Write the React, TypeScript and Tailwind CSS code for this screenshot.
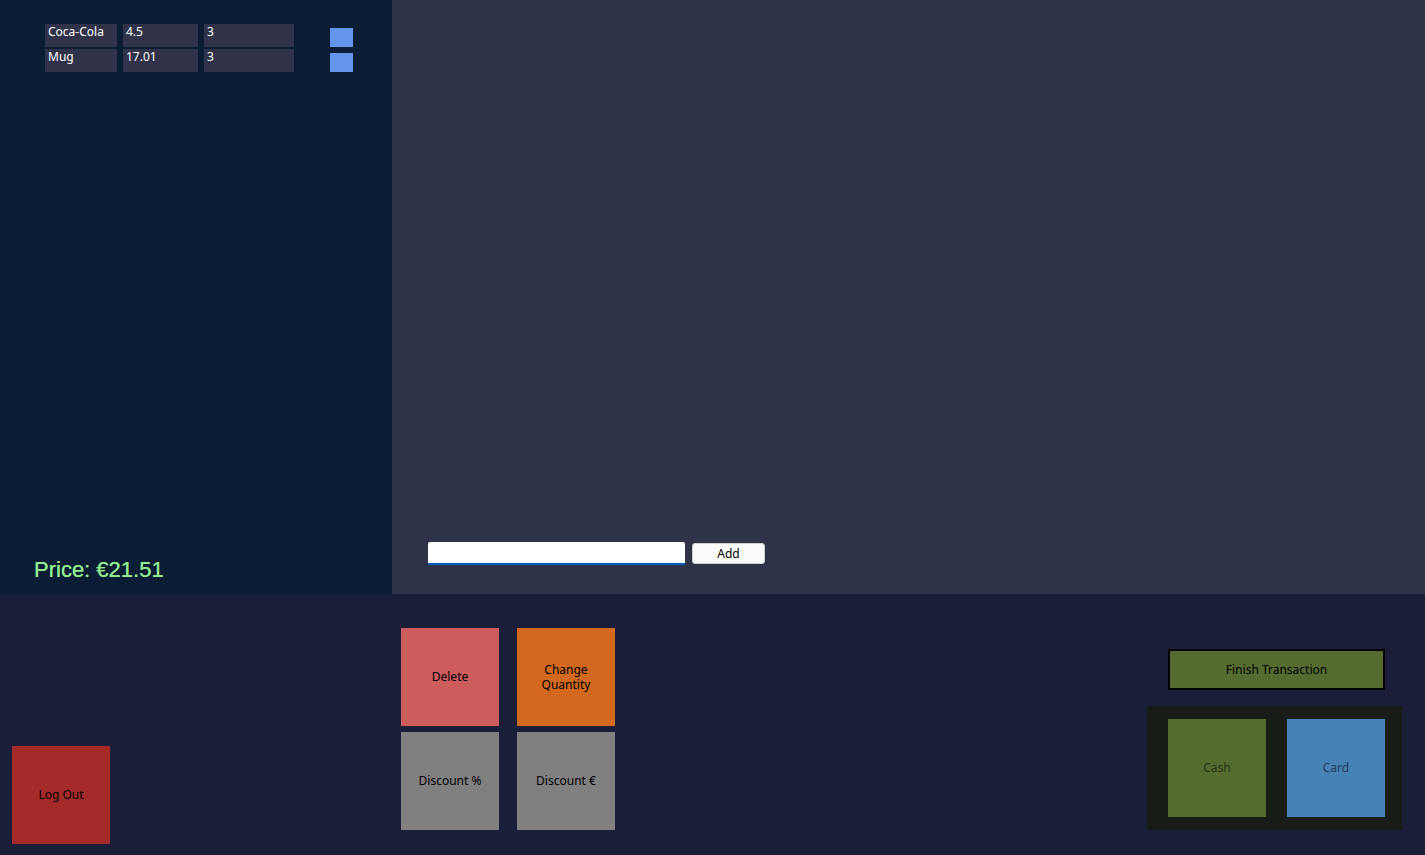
import React from "react";

const rows = [
  { name: "Coca-Cola", price: "4.5", qty: "3" },
  { name: "Mug", price: "17.01", qty: "3" },
];

export default function App() {
  const font = { fontFamily: '"Noto Sans", "Open Sans", sans-serif' };
  return (
    <div className="w-[1425px] h-[855px] flex flex-col overflow-hidden text-[12px]" style={font}>
      <div className="flex h-[594px]">
        <div className="w-[392px] bg-[#0b1d35] flex flex-col justify-between">
          <div className="pt-[24px] pl-[45px] flex flex-col gap-[2px]">
            {rows.map((r) => (
              <div key={r.name} className="flex items-center h-[23px]">
                <div className="w-[72px] h-[23px] bg-[#2f3249] text-white pl-[3px] leading-[16px]">{r.name}</div>
                <div className="w-[75px] h-[23px] bg-[#2f3249] text-white pl-[3px] leading-[16px] ml-[6px]">{r.price}</div>
                <div className="w-[90px] h-[23px] bg-[#2f3249] text-white pl-[3px] leading-[16px] ml-[6px]">{r.qty}</div>
                <div className="w-[23px] h-[19px] bg-[#6495ed] ml-[36px] mt-[3px]"></div>
              </div>
            ))}
          </div>
          <div
            className="pl-[34px] pb-[13px] text-[22px] leading-[22px] text-[#90ee90] [text-shadow:0_0_0.4px_#90ee90]"
            style={{ fontFamily: '"Liberation Sans", Arial, sans-serif' }}
          >
            Price: €21.51
          </div>
        </div>
        <div className="flex-1 bg-[#2e3349] flex flex-col justify-end pb-[29px] pl-[36px]">
          <div className="flex items-center">
            <div className="w-[257px] h-[23px] bg-white border-b-2 border-[#005fb8] rounded-t-[2px]"></div>
            <button className="ml-[7px] w-[73px] h-[21px] bg-[#fbfbfb] border border-[#d0d0d0] rounded-[3px] text-black text-[12px] leading-[18px]">
              Add
            </button>
          </div>
        </div>
      </div>
      <div className="flex-1 bg-[#1a1e38] flex">
        <div className="w-[392px] flex items-end pl-[12px] pb-[11px]">
          <div className="w-[98px] h-[98px] bg-[#a52a2a] flex items-center justify-center text-black">Log Out</div>
        </div>
        <div className="pt-[34px] pl-[9px]">
          <div className="grid grid-cols-[98px_98px] gap-x-[18px] gap-y-[6px]">
            <div className="h-[98px] bg-[#cd5c5c] flex items-center justify-center text-black">Delete</div>
            <div className="h-[98px] bg-[#d2691e] flex items-center justify-center text-black text-center leading-[15px]">
              Change
              <br />
              Quantity
            </div>
            <div className="h-[98px] bg-[#808080] flex items-center justify-center text-black">Discount %</div>
            <div className="h-[98px] bg-[#808080] flex items-center justify-center text-black">Discount €</div>
          </div>
        </div>
        <div className="ml-auto pr-[23px] pt-[55px] flex flex-col">
          <div className="ml-[21px] w-[217px] h-[41px] bg-[#556b2f] border-2 border-black flex items-center justify-center text-black">
            Finish Transaction
          </div>
          <div className="mt-[16px] w-[255px] h-[124px] bg-[#181c16] flex pl-[21px] pt-[13px] gap-[21px]">
            <div className="w-[98px] h-[98px] bg-[#556b2f] flex items-center justify-center text-[#28331a]">Cash</div>
            <div className="w-[98px] h-[98px] bg-[#4682b4] flex items-center justify-center text-[#213c5c]">Card</div>
          </div>
        </div>
      </div>
    </div>
  );
}
